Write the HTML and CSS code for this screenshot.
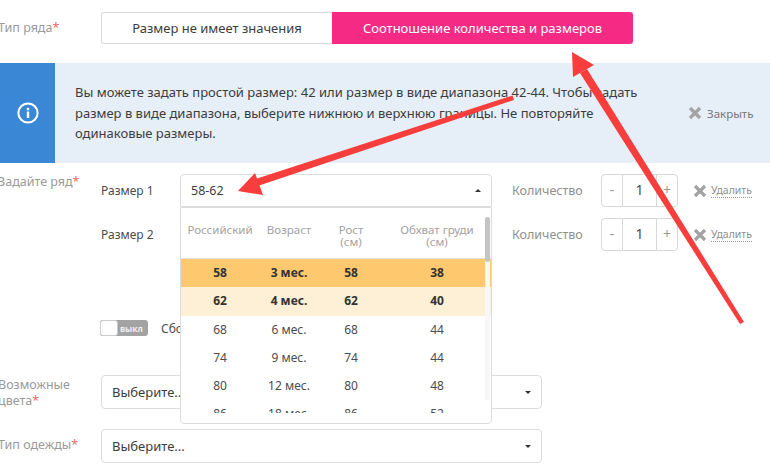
FILE: index.html
```html
<!DOCTYPE html>
<html lang="ru">
<head>
<meta charset="utf-8">
<title>Тип ряда</title>
<link rel="stylesheet" href="styles.css">
</head>
<body>
<div class="page">
  <section class="row type-row">
    <div class="label">Тип ряда<span class="req">*</span></div>
    <div class="segments">
      <button class="seg">Размер не имеет значения</button>
      <button class="seg seg-on">Соотношение количества и размеров</button>
    </div>
  </section>

  <section class="alert">
    <div class="alert-icon">
      <svg width="22" height="22" viewBox="0 0 22 22" fill="none"><circle cx="11" cy="11" r="9.6" stroke="#fff" stroke-width="2"/><rect x="9.8" y="9.5" width="2.4" height="6.5" fill="#fff"/><rect x="9.8" y="5.8" width="2.4" height="2.4" fill="#fff"/></svg>
    </div>
    <p class="alert-text">Вы можете задать простой размер: 42 или размер в виде диапазона 42-44. Чтобы задать размер в виде диапазона, выберите нижнюю и верхнюю границы. Не повторяйте одинаковые размеры.</p>
    <div class="alert-close">
      <svg class="x" width="14" height="14" viewBox="0 0 14 14"><path d="M2 2l10 10M12 2L2 12" stroke="#a3a3a3" stroke-width="3.2"/></svg>
      <span>Закрыть</span>
    </div>
  </section>

  <section class="row sizes">
    <div class="label label-sizes">Задайте ряд<span class="req">*</span></div>
    <div class="size-list">
      <div class="size-row">
        <span class="size-name">Размер 1</span>
        <div class="select select-open">
          <span class="select-value">58-62</span>
          <i class="caret caret-up"></i>
          <div class="dropdown">
            <div class="thead tgrid">
              <span>Российский</span><span>Возраст</span><span>Рост<br>(см)</span><span>Обхват груди<br>(см)</span>
            </div>
            <div class="tbody">
              <div class="tr tgrid tr-active"><span>58</span><span>3 мес.</span><span>58</span><span>38</span></div>
              <div class="tr tgrid tr-range"><span>62</span><span>4 мес.</span><span>62</span><span>40</span></div>
              <div class="tr tgrid"><span>68</span><span>6 мес.</span><span>68</span><span>44</span></div>
              <div class="tr tgrid"><span>74</span><span>9 мес.</span><span>74</span><span>44</span></div>
              <div class="tr tgrid"><span>80</span><span>12 мес.</span><span>80</span><span>48</span></div>
              <div class="tr tgrid"><span>86</span><span>18 мес.</span><span>86</span><span>52</span></div>
            </div>
            <div class="track"><div class="thumb"></div></div>
          </div>
        </div>
        <span class="qty-label">Количество</span>
        <div class="stepper"><span class="step">-</span><span class="step-val">1</span><span class="step">+</span></div>
        <div class="remove">
          <svg class="x" width="14" height="14" viewBox="0 0 14 14"><path d="M2 2l10 10M12 2L2 12" stroke="#a3a3a3" stroke-width="3.2"/></svg>
          <a class="remove-link">Удалить</a>
        </div>
      </div>
      <div class="size-row">
        <span class="size-name">Размер 2</span>
        <div class="select-spacer"></div>
        <span class="qty-label">Количество</span>
        <div class="stepper"><span class="step">-</span><span class="step-val">1</span><span class="step">+</span></div>
        <div class="remove">
          <svg class="x" width="14" height="14" viewBox="0 0 14 14"><path d="M2 2l10 10M12 2L2 12" stroke="#a3a3a3" stroke-width="3.2"/></svg>
          <a class="remove-link">Удалить</a>
        </div>
      </div>
      <div class="toggle-row">
        <div class="toggle"><span class="knob"></span><span class="toggle-text">выкл</span></div>
        <span class="toggle-label">Сборный ряд</span>
      </div>
    </div>
  </section>

  <section class="row colors-row">
    <div class="label">Возможные цвета<span class="req">*</span></div>
    <div class="select select-wide"><span class="select-value">Выберите...</span><i class="caret"></i></div>
  </section>

  <section class="row clothes-row">
    <div class="label">Тип одежды<span class="req">*</span></div>
    <div class="select select-wide"><span class="select-value">Выберите...</span><i class="caret"></i></div>
  </section>

  <svg class="arrows" width="770" height="475" viewBox="0 0 770 475">
    <path d="M512.5 95.5L514 100L252 188L249 181Z" fill="#f73e3c"/>
    <path d="M238 191L255 173L263 195Z" fill="#f73e3c"/>
    <path d="M740 324L744 322L587 69L580 73Z" fill="#f73e3c"/>
    <path d="M572 52L573 77L594 65Z" fill="#f73e3c"/>
  </svg>
</div>
</body>
</html>
```
FILE: styles.css
```css
* { box-sizing: border-box; }
html, body { margin: 0; padding: 0; }
body {
  width: 770px;
  height: 475px;
  overflow: hidden;
  background: #fff;
  font-family: "Noto Sans", "Open Sans", sans-serif;
  font-size: 13px;
  color: #3c3c3c;
}
.page { position: relative; width: 770px; height: 475px; overflow: hidden; padding-top: 12px; }

.row { display: flex; align-items: flex-start; padding-left: 2px; margin-left: -2px; }
.label {
  width: 103px;
  margin-left: -2px;
  flex: none;
  color: #9a9a9a;
  font-size: 12.5px;
  line-height: 16px;
}
.req { color: #ee6a6a; }

.type-row .label { padding-top: 8px; }
.segments { display: flex; height: 32px; }
.seg {
  font: inherit;
  font-size: 13px;
  height: 32px;
  padding: 0;
  border: 1px solid #dcdcdc;
  border-right: 0;
  border-radius: 3px 0 0 3px;
  background: #fff;
  color: #3c3c3c;
  width: 231px;
}
.seg-on {
  width: 301px;
  background: #f42a85;
  border: 0;
  border-radius: 0 3px 3px 0;
  color: #fff;
}

.alert {
  display: flex;
  align-items: center;
  height: 100px;
  margin-top: 19px;
  background: #e6eff8;
}
.alert-icon {
  width: 55px;
  height: 100%;
  flex: none;
  background: #3a87d6;
  display: flex;
  align-items: center;
  justify-content: center;
}
.alert-text {
  margin: 0 0 0 20px;
  width: 570px;
  flex: none;
  font-size: 13px;
  line-height: 20.5px;
  color: #3c3c3c;
}
.alert-close {
  margin-left: 43px;
  display: flex;
  align-items: center;
  gap: 5px;
  font-size: 11.5px;
  color: #777;
}
.x { flex: none; }

.sizes { margin-top: 11px; }
.label-sizes { padding-top: 0; }
.size-list { display: flex; flex-direction: column; }
.size-row { display: flex; align-items: center; height: 33px; margin-bottom: 11px; }
.size-name { width: 79px; font-size: 12px; color: #4c4c4c; }
.select {
  position: relative;
  display: flex;
  align-items: center;
  height: 33px;
  border: 1px solid #dcdcdc;
  border-radius: 4px;
  background: #fff;
  padding: 0 11px 0 10px;
  color: #3c3c3c;
  font-size: 13px;
}
.select-open { width: 312px; border-radius: 4px 4px 0 0; font-size: 12.5px; }
.select-spacer { width: 312px; }
.select-value { flex: 1; }
.caret {
  width: 0;
  height: 0;
  border-left: 3px solid transparent;
  border-right: 3px solid transparent;
  border-top: 3px solid #333;
  margin-right: -1px;
}
.caret-up { border-top: 0; border-bottom: 3px solid #333; }

.qty-label { width: 89px; margin-left: 20px; color: #8f8f8f; font-size: 12.5px; }
.stepper {
  display: flex;
  width: 77px;
  height: 33px;
  border: 1px solid #d8d8d8;
  border-radius: 4px;
  color: #999;
}
.step { width: 20px; flex: none; text-align: center; line-height: 30px; font-size: 14px; }
.step-val {
  flex: 1;
  text-align: center;
  line-height: 30px;
  font-size: 14px;
  color: #4c4c4c;
  border-left: 1px solid #d8d8d8;
  border-right: 1px solid #d8d8d8;
}
.remove { display: flex; align-items: center; gap: 4px; margin-left: 15px; }
.remove-link { font-size: 10.5px; color: #8f8f8f; border-bottom: 1px dotted #999; line-height: 13px; }

.dropdown {
  position: absolute;
  z-index: 2;
  left: -1px;
  top: 32px;
  width: 312px;
  height: 217px;
  padding-bottom: 10px;
  background: #fff;
  border: 1px solid #dcdcdc;
  border-radius: 0 0 4px 4px;
  display: flex;
  flex-direction: column;
}
.tgrid { display: grid; grid-template-columns: 78px 60px 64px 108px; text-align: center; }
.thead {
  height: 51px;
  padding-top: 16px;
  flex: none;
  font-size: 11.5px;
  line-height: 12px;
  color: #a2a2a2;
  border-bottom: 1px solid #e2e2e2;
}
.tbody { flex: 1; overflow: hidden; }
.tr { height: 28.3px; line-height: 28px; font-size: 12px; color: #4c4c4c; }
.tr-active { background: #fec96e; color: #333; font-weight: 700; }
.tr-range { background: #fef0d6; color: #333; font-weight: 700; }
.track {
  position: absolute;
  left: 304px;
  top: 9px;
  width: 5px;
  height: 183px;
  background: #f7f7f7;
}
.thumb { width: 100%; height: 45px; background: #c4c4c4; border-radius: 3px; }

.toggle-row { display: flex; align-items: center; margin-top: 58px; height: 16px; }
.toggle {
  display: flex;
  align-items: center;
  width: 48px;
  height: 16px;
  margin-left: -1px;
  border-radius: 3px;
  background: #a3a3a3;
  color: #eee;
  font-size: 8.5px;
  font-weight: 700;
}
.knob { width: 18px; height: 16px; background: #fff; border: 1px solid #ccc; border-radius: 3px; }
.toggle-text { margin-left: 2px; }
.toggle-label { margin-left: 13px; font-size: 12px; color: #4c4c4c; }

.colors-row { margin-top: 39px; }
.colors-row .label { padding-top: 2px; padding-right: 20px; }
.select-wide { width: 441px; height: 34px; }
.clothes-row { margin-top: 20px; }
.clothes-row .label { padding-top: 8px; }

.arrows { position: absolute; left: 0; top: 0; z-index: 5; pointer-events: none; }
```
